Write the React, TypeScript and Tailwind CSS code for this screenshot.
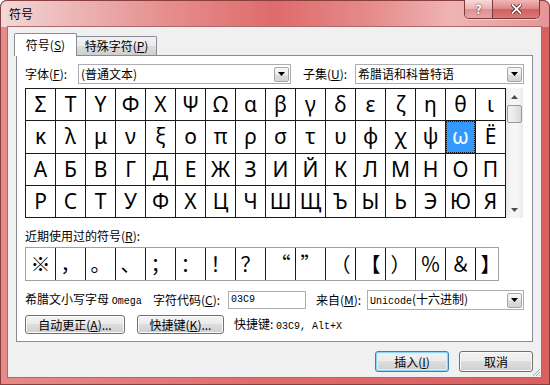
import React from "react";

const rows = [
  "ΣΤΥΦΧΨΩαβγδεζηθι",
  "κλμνξοπρστυφχψωЁ",
  "АБВГДЕЖЗИЙКЛМНОП",
  "РСТУФХЦЧШЩЪЫЬЭЮЯ",
];

const recent = ["※", "，", "。", "、", "；", "：", "！", "？", "“", "”", "（", "【", "）", "％", "＆", "】"];

function Arrow({ up = false }: { up?: boolean }) {
  return (
    <svg width="7" height="4" viewBox="0 0 7 4" className={up ? "" : "rotate-180"}>
      <path d="M0 4 L3.5 0 L7 4 Z" fill="#4d4d4d" />
    </svg>
  );
}

function Combo({ width, children }: { width: string; children: React.ReactNode }) {
  return (
    <div className={`${width} h-[20px] flex items-center border border-[#abadb3] bg-white pl-[2px] pr-[1px]`}>
      <div className="flex-1 min-w-0 text-[12px] leading-[18px] whitespace-nowrap">{children}</div>
      <div className="w-[15px] h-[15px] shrink-0 flex items-center justify-center border border-[#a7a7a7] rounded-[2px] bg-[linear-gradient(180deg,#f7f7f7_0%,#ececec_50%,#dedede_50%,#d4d4d4_100%)]">
        <svg width="7" height="4" viewBox="0 0 7 4">
          <path d="M0 0 L7 0 L3.5 4 Z" fill="#000" />
        </svg>
      </div>
    </div>
  );
}

const btn =
  "h-full rounded-[3px] border border-[#707070] bg-[linear-gradient(180deg,#f2f2f2_0%,#ebebeb_50%,#dddddd_50%,#cfcfcf_100%)] shadow-[inset_0_0_0_1px_#fbfbfb] text-[12px] leading-none flex items-center justify-center";

export default function App() {
  return (
    <div className="w-[550px] h-[385px] overflow-hidden rounded-t-[7px] bg-[linear-gradient(90deg,#e68a8a_0%,#df6a6a_50%,#da6060_100%)] shadow-[inset_0_0_0_1px_#8a3f3f] font-['Noto_Sans_CJK_SC',sans-serif] text-black flex flex-col">
      {/* title bar */}
      <div className="h-[27px] flex items-start rounded-t-[7px] bg-[linear-gradient(90deg,#f3d8d8_0%,#eebebe_10%,#e68e8e_30%,#df6b6b_50%,#e68c8c_68%,#efb4b4_82%,#e59595_100%)] shadow-[inset_0_1px_0_0_#8a3f3f,inset_1px_0_0_0_#8a3f3f,inset_-1px_0_0_0_#8a3f3f]">
        <div className="ml-[9px] mt-[6px] text-[12px] leading-[16px]">符号</div>
        <div className="ml-auto mr-[10px] flex h-[19px] rounded-b-[5px] overflow-hidden border border-t-0 border-[#7a3a3a] shadow-[0_1px_0_0_#f6d0d0]">
          <div className="w-[28px] flex items-center justify-center border-r border-[#7a3a3a] bg-[linear-gradient(180deg,#f6dada_0%,#ebb0b0_50%,#df9090_50%,#e7a4a4_100%)] text-[12px] font-bold leading-none text-white [text-shadow:0_0_2px_#3a1a1a]">
            ?
          </div>
          <div className="w-[46px] flex items-center justify-center bg-[linear-gradient(180deg,#f0b8b8_0%,#e08484_50%,#d06060_50%,#da7878_100%)]">
            <svg width="11" height="10" viewBox="0 0 11 10">
              <path d="M1.5 1 L9.5 9 M9.5 1 L1.5 9" stroke="#4a1f1f" strokeWidth="3.4" strokeLinecap="square" />
              <path d="M1.5 1 L9.5 9 M9.5 1 L1.5 9" stroke="#ffffff" strokeWidth="1.8" strokeLinecap="square" />
            </svg>
          </div>
        </div>
      </div>

      {/* client area */}
      <div className="relative mx-[8px] w-[533px] h-[350px] bg-[#f0f0f0] shadow-[0_0_0_1px_#a86a6a] px-[8px] pt-[6px] flex flex-col">
        {/* tabs */}
        <div className="h-[22px] flex items-end">
          <div className="relative z-10 -ml-[2px] -mb-px w-[63px] h-[23px] bg-white border border-b-0 border-[#898c95] rounded-t-[2px] flex items-center justify-center text-[12px] leading-none">
            符号(<span className="underline">S</span>)
          </div>
          <div className="w-[80px] h-[19px] border border-b-0 border-l-0 border-[#898c95] rounded-tr-[2px] bg-[linear-gradient(180deg,#f2f2f2_0%,#ebebeb_50%,#dddddd_50%,#cfcfcf_100%)] flex items-center justify-center text-[12px] leading-none">
            特殊字符(<span className="underline">P</span>)
          </div>
        </div>

        {/* tab panel */}
        <div className="h-[287px] border border-[#898c95] bg-white px-[8px] flex flex-col">
          <div className="mt-[8px] h-[20px] flex items-center text-[12px]">
            <div className="w-[53px] whitespace-nowrap">
              字体(<span className="underline">F</span>):
            </div>
            <Combo width="w-[213px]">(普通文本)</Combo>
            <div className="ml-[12px] w-[52px] whitespace-nowrap">
              子集(<span className="underline">U</span>):
            </div>
            <Combo width="w-[169px]">希腊语和科普特语</Combo>
          </div>

          {/* symbol grid */}
          <div className="mt-[4px] h-[130px] flex">
            <div className="w-[481px] h-full p-px gap-px bg-[#1a1a1a] grid grid-cols-16 grid-rows-4 font-['Noto_Sans',sans-serif] text-[21px] leading-none">
              {rows.map((row, r) =>
                Array.from(row).map((ch, c) => {
                  const sel = r === 1 && c === 14;
                  return (
                    <div
                      key={`${r}-${c}`}
                      className={
                        sel
                          ? "flex items-center justify-center bg-[#3399ff] text-white outline-1 outline-dotted outline-[#1a1a1a] -outline-offset-1"
                          : "flex items-center justify-center bg-white"
                      }
                    >
                      {ch}
                    </div>
                  );
                })
              )}
            </div>
            <div className="w-[17px] h-full flex flex-col bg-[linear-gradient(90deg,#e9e9e9_0%,#f6f6f6_30%,#f6f6f6_70%,#eaeaea_100%)]">
              <div className="h-[17px] flex items-center justify-center">
                <Arrow up />
              </div>
              <div className="mx-px h-[18px] rounded-[2px] border border-[#9a9a9a] bg-[linear-gradient(90deg,#f3f3f3_0%,#e8e8e8_50%,#d8d8d8_100%)]" />
              <div className="flex-1" />
              <div className="h-[17px] flex items-center justify-center">
                <Arrow />
              </div>
            </div>
          </div>

          <div className="mt-[10px] h-[16px] text-[12px] leading-[16px]">
            近期使用过的符号(<span className="underline">R</span>):
          </div>

          {/* recently used */}
          <div className="mt-[3px] h-[34px] w-[474px] flex overflow-hidden border border-[#a0a0a0] bg-white text-[20px] leading-none">
            {recent.map((ch, i) => (
              <div key={i} className="w-[30px] shrink-0 h-full flex items-center justify-center border-r border-[#1a1a1a]">
                {ch}
              </div>
            ))}
          </div>

          <div className="mt-[10px] h-[18px] flex items-center text-[12px] leading-none">
            <div className="w-[128px] whitespace-nowrap">
              希腊文小写字母 <span className="font-['Liberation_Mono',monospace] text-[10px]">Omega</span>
            </div>
            <div className="w-[75px] whitespace-nowrap">
              字符代码(<span className="underline">C</span>):
            </div>
            <div className="w-[78px] h-[18px] border border-[#abadb3] bg-white flex items-center px-[2px] font-['Liberation_Mono',monospace] text-[10px]">
              03C9
            </div>
            <div className="ml-[10px] w-[51px] whitespace-nowrap">
              来自(<span className="underline">M</span>):
            </div>
            <Combo width="w-[157px]">
              <span className="font-['Liberation_Mono',monospace] text-[10px]">Unicode</span>(十六进制)
            </Combo>
          </div>

          <div className="mt-[6px] h-[19px] flex items-center text-[12px]">
            <div className={`${btn} w-[100px]`}>
              自动更正(<span className="underline">A</span>)...
            </div>
            <div className={`${btn} ml-[12px] w-[87px]`}>
              快捷键(<span className="underline">K</span>)...
            </div>
            <div className="ml-[10px] whitespace-nowrap leading-none">
              快捷键: <span className="font-['Liberation_Mono',monospace] text-[10px]">03C9, Alt+X</span>
            </div>
          </div>
        </div>

        {/* dialog buttons */}
        <div className="mt-[9px] h-[21px] flex justify-end gap-[10px]">
          <div className="w-[74px] h-full rounded-[3px] border border-[#3c7fb1] bg-[linear-gradient(180deg,#f2f2f2_0%,#ebebeb_50%,#dddddd_50%,#cfcfcf_100%)] shadow-[inset_0_0_0_1px_#8ed6f5,inset_0_0_0_2px_#d8f0fa] text-[12px] leading-none flex items-center justify-center">
            插入(<span className="underline">I</span>)
          </div>
          <div className={`${btn} w-[74px]`}>取消</div>
        </div>

        {/* size grip */}
        <svg className="absolute right-0 bottom-0" width="10" height="10" viewBox="0 0 10 10">
          <path d="M9 2 L2 9 M9 5 L5 9 M9 8 L8 9" stroke="#a9a9a9" strokeWidth="1" />
        </svg>
      </div>
    </div>
  );
}
